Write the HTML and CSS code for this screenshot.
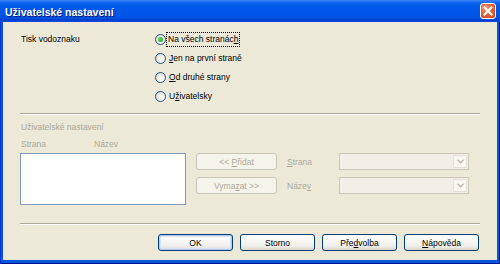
FILE: index.html
```html
<!DOCTYPE html>
<html lang="cs">
<head>
<meta charset="utf-8">
<title>Uživatelské nastavení</title>
<link rel="stylesheet" href="styles.css">
</head>
<body>
<div class="window">
  <div class="titlebar">
    <span class="title">Uživatelské nastavení</span>
    <span class="close">
      <svg width="10" height="10" viewBox="0 0 10 10"><path d="M1.5 1.5 L8.5 8.5 M8.5 1.5 L1.5 8.5" stroke="#fff" stroke-width="2" stroke-linecap="square"/></svg>
    </span>
  </div>
  <div class="client">
    <div class="top">
      <div class="toplabel">Tisk vodoznaku</div>
      <div class="radios">
        <div class="radio"><span class="dot checked"></span><span class="rlabel focus">Na všech stranác<span class="ak">h</span></span></div>
        <div class="radio"><span class="dot"></span><span class="rlabel"><span class="ak">J</span>en na první straně</span></div>
        <div class="radio"><span class="dot"></span><span class="rlabel"><span class="ak">O</span>d druhé strany</span></div>
        <div class="radio"><span class="dot"></span><span class="rlabel">U<span class="ak">ž</span>ivatelsky</span></div>
      </div>
    </div>
    <div class="sep sep1"></div>
    <div class="grouplabel dis">Uživatelské nastavení</div>
    <div class="cols dis"><span class="col1">Strana</span><span>Název</span></div>
    <div class="lower">
      <div class="listbox"></div>
      <div class="btncol">
        <div class="dbtn"><span>&lt;&lt; <span class="ak">P</span>řidat</span></div>
        <div class="dbtn"><span>Vyma<span class="ak">z</span>at &gt;&gt;</span></div>
      </div>
      <div class="fields">
        <div class="field"><span class="flabel dis"><span class="ak">S</span>trana</span><div class="combo"><span class="arrow"><svg width="7" height="5" viewBox="0 0 7 5"><path d="M0.5 0.8 L3.5 3.8 L6.5 0.8" stroke="#bdb9ab" stroke-width="1.3" fill="none"/></svg></span></div></div>
        <div class="field"><span class="flabel dis">Náze<span class="ak">v</span></span><div class="combo"><span class="arrow"><svg width="7" height="5" viewBox="0 0 7 5"><path d="M0.5 0.8 L3.5 3.8 L6.5 0.8" stroke="#bdb9ab" stroke-width="1.3" fill="none"/></svg></span></div></div>
      </div>
    </div>
    <div class="sep sep2"></div>
    <div class="buttons">
      <div class="btn default"><span>OK</span></div>
      <div class="btn"><span>Storno</span></div>
      <div class="btn"><span>Pře<span class="ak">d</span>volba</span></div>
      <div class="btn"><span><span class="ak">N</span>ápověda</span></div>
    </div>
  </div>
</div>
</body>
</html>
```
FILE: styles.css
```css
* { box-sizing: border-box; }
html, body { margin: 0; padding: 0; }
body {
  width: 500px;
  height: 264px;
  overflow: hidden;
  font-family: "Liberation Sans", Arial, sans-serif;
  font-size: 8.5px;
  color: #000;
  background: #0A47DA;
}
.window {
  width: 500px;
  height: 264px;
  display: flex;
  flex-direction: column;
  background: #0855DD;
  box-shadow: inset 1px 0 0 #0831D9, inset -1px 0 0 #00138C, inset 0 -1px 0 #00138C;
}
.titlebar {
  height: 22px;
  flex: none;
  display: flex;
  align-items: center;
  justify-content: space-between;
  padding: 0 4px 0 5px;
  background: linear-gradient(#3D87F5 0, #0A62EF 3px, #0058E8 7px, #0055E5 15px, #0050DE 18px, #003ED2 21px, #0A47DA 22px);
}
.title {
  color: #fff;
  font-weight: bold;
  font-size: 10.5px;
  text-shadow: 1px 1px 0 #0A1883;
  padding-top: 1px;
}
.close {
  width: 16px;
  height: 16px;
  border: 1px solid #fff;
  border-radius: 3px;
  background: radial-gradient(circle at 35% 30%, #F09A7A 0, #E2623B 45%, #CC4218 100%);
  display: flex;
  align-items: center;
  justify-content: center;
}
.close svg { display: block; }
.client {
  flex: 1;
  margin: 0 3px 4px 3px;
  background: #ECE9D8;
  padding: 8px 17px 0 17px;
  display: flex;
  flex-direction: column;
}
.top { display: flex; align-items: flex-start; }
.toplabel { width: 135px; padding-left: 1px; line-height: 19px; }
.radios { display: flex; flex-direction: column; }
.radio { height: 19px; display: flex; align-items: center; }
.dot {
  width: 11px;
  height: 11px;
  border-radius: 50%;
  border: 1px solid #1C5180;
  background: radial-gradient(circle at 65% 65%, #FFFFFF 0, #F2F1EA 40%, #D6D3C5 100%);
  margin-right: 2px;
  display: flex;
  align-items: center;
  justify-content: center;
}
.dot.checked::after {
  content: "";
  width: 5px;
  height: 5px;
  border-radius: 50%;
  background: radial-gradient(circle at 40% 40%, #6EE26E 0, #21A121 70%);
}
.rlabel { line-height: 11px; padding: 1px 1px; }
.rlabel.focus { outline: 1px dotted #000; outline-offset: 0; margin-left: -1px; }
.ak { text-decoration: underline; }
.sep {
  height: 2px;
  border-top: 1px solid #ACA899;
  border-bottom: 1px solid #FFFFFF;
  flex: none;
}
.sep1 { margin-top: 7px; }
.dis { color: #ACA899; }
.grouplabel { margin-top: 6px; line-height: 12px; padding-left: 1px; }
.cols { margin-top: 5px; line-height: 12px; padding-left: 1px; display: flex; }
.col1 { width: 73px; }
.lower { margin-top: 3px; display: flex; align-items: flex-start; }
.listbox {
  width: 166px;
  height: 52px;
  border: 1px solid #7F9DB9;
  background: #fff;
}
.btncol {
  margin-left: 10px;
  display: flex;
  flex-direction: column;
  gap: 7px;
}
.dbtn {
  width: 81px;
  height: 17px;
  border: 1px solid #C9C7BA;
  border-radius: 3px;
  background: #F5F4EA;
  color: #ACA899;
  display: flex;
  align-items: center;
  justify-content: center;
}
.fields {
  margin-left: 10px;
  display: flex;
  flex-direction: column;
  gap: 7px;
}
.field { display: flex; align-items: center; height: 17px; }
.flabel { width: 52px; }
.combo {
  width: 130px;
  height: 17px;
  border: 1px solid #CBC8BA;
  background: #F2F0E6;
  display: flex;
  justify-content: flex-end;
  padding: 1px;
}
.arrow {
  width: 14px;
  height: 13px;
  border: 1px solid #E4E2D8;
  border-radius: 1px;
  background: #F7F6F0;
  display: flex;
  align-items: center;
  justify-content: center;
}
.arrow svg { display: block; }
.sep2 { margin-top: 18px; }
.buttons {
  margin-top: 9px;
  display: flex;
  justify-content: flex-end;
  gap: 7px;
  padding-right: 1px;
}
.btn {
  width: 75px;
  height: 17px;
  border: 1px solid #003C74;
  border-radius: 3px;
  background: linear-gradient(#FFFFFF 0, #F7F7F4 40%, #ECEBE6 80%, #D8D4C8 100%);
  display: flex;
  align-items: center;
  justify-content: center;
}
.btn.default { box-shadow: inset 0 0 0 1px #B4CCF2, inset 0 0 0 2px #D3E0F7; }
```
